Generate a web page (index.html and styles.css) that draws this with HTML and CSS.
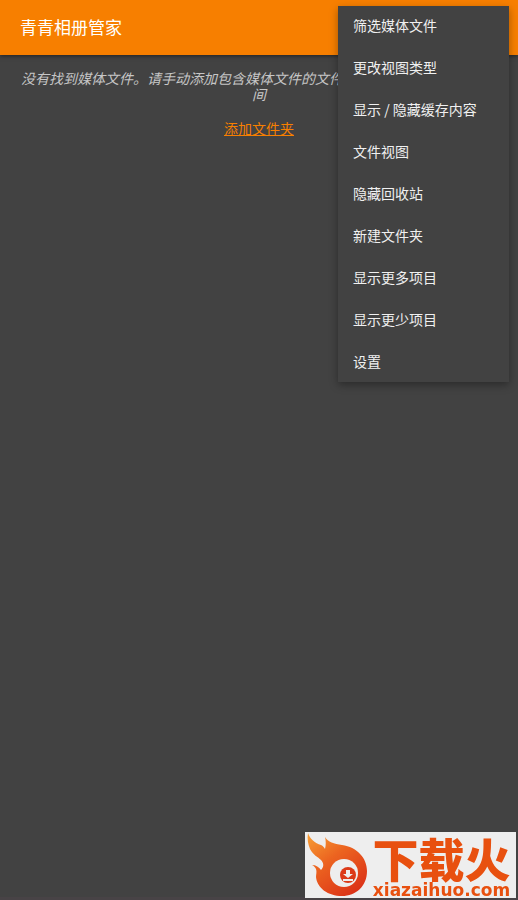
FILE: index.html
```html
<!DOCTYPE html>
<html lang="zh-CN">
<head>
    <meta charset="UTF-8">
    <meta name="viewport" content="width=device-width, initial-scale=1.0">
    <title>青青相册管家</title>
    <link rel="stylesheet" href="styles.css">
</head>
<body>
    <header class="toolbar">
        <h1>青青相册管家</h1>
    </header>

    <main class="content">
        <p class="empty-text">没有找到媒体文件。请手动添加包含媒体文件的文件夹，或检查可用的存储空间</p>
        <a href="#" class="add-link">添加文件夹</a>
    </main>

    <nav class="menu">
        <button class="menu-item">筛选媒体文件</button>
        <button class="menu-item">更改视图类型</button>
        <button class="menu-item">显示 / 隐藏缓存内容</button>
        <button class="menu-item">文件视图</button>
        <button class="menu-item">隐藏回收站</button>
        <button class="menu-item">新建文件夹</button>
        <button class="menu-item">显示更多项目</button>
        <button class="menu-item">显示更少项目</button>
        <button class="menu-item">设置</button>
    </nav>

    <div class="watermark">
        <svg class="flame" width="62" height="66" viewBox="0 0 62 66">
            <defs>
                <linearGradient id="fire" x1="0" y1="0" x2="0.7" y2="1">
                    <stop offset="0" stop-color="#f7a035"/>
                    <stop offset="0.45" stop-color="#ec6420"/>
                    <stop offset="1" stop-color="#dc3418"/>
                </linearGradient>
            </defs>
            <path fill="url(#fire)" d="M3 1C5 7 10 11 16 13C18 14 19 15 20 17C21 13 21 9 20 5C23 10 29 12 37 13C52 15 62 26 62 39C62 54 51 64 37 64C23 64 12 56 11 45C11 42 12 40 11 37C10 35 9 34 7 33C11 33 14 35 16 38C19 35 19 31 16 28C13 25 8 23 5 17C3 12 2 7 3 1Z"/>
            <circle cx="39" cy="41" r="14" fill="#eee"/>
            <circle cx="43" cy="43" r="8" fill="#dc3a18"/>
            <path d="M41 38H45V42H48L43 46L38 42H41ZM38 47H48V49H38Z" fill="#eee"/>
        </svg>
        <div class="watermark-text">
            <span class="watermark-name">下载火</span>
            <span class="watermark-site">xiazaihuo.com</span>
        </div>
    </div>
</body>
</html>
```

FILE: styles.css
```css
* {
    box-sizing: border-box;
}
body {
    margin: 0;
    min-height: 100vh;
    background: #424242;
    border-bottom: 3px solid #484346;
    color: #fff;
    font-family: "Noto Sans CJK SC", sans-serif;
    font-size: 14px;
}
.toolbar {
    display: flex;
    align-items: center;
    height: 55px;
    padding: 0 20px 2px;
    background: #f77f00;
    box-shadow: 0 1px 4px rgba(0, 0, 0, 0.5);
}
.toolbar h1 {
    margin: 0;
    font-size: 17px;
    font-weight: 400;
}
.content {
    padding: 15px 20px;
    text-align: center;
}
.empty-text {
    margin: 0 0 16px;
    line-height: 16px;
    font-style: italic;
    color: #c6c6c6;
}
.add-link {
    color: #f77f00;
}
.menu {
    position: absolute;
    top: 6px;
    right: 9px;
    display: flex;
    flex-direction: column;
    gap: 2px;
    width: 171px;
    background: #424242;
    box-shadow: 0 3px 8px rgba(0, 0, 0, 0.35);
}
.menu-item {
    height: 40px;
    padding: 0 15px 2px;
    border: none;
    background: none;
    color: #f0f0f0;
    font-family: inherit;
    font-size: 14px;
    text-align: left;
    cursor: pointer;
}
.watermark {
    position: fixed;
    right: 2px;
    bottom: 2px;
    display: flex;
    width: 211px;
    height: 66px;
    background: #eee;
    color: #e8500f;
}
.flame {
    flex: none;
}
.watermark-text {
    display: flex;
    flex-direction: column;
    align-items: center;
    flex: 1;
}
.watermark-name {
    font-size: 46px;
    font-weight: 900;
    line-height: 50px;
}
.watermark-site {
    font-family: "DejaVu Sans", sans-serif;
    font-size: 17px;
    font-weight: 700;
    line-height: 16px;
}
```
